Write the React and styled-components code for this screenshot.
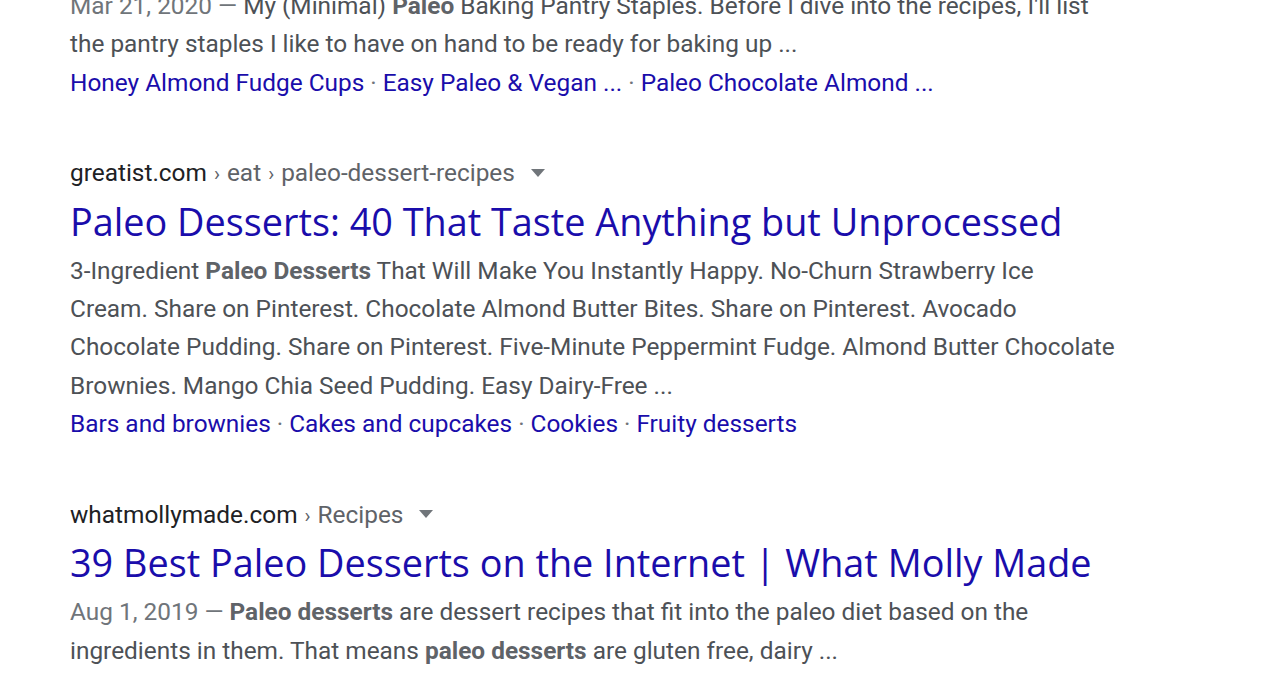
import styled, { createGlobalStyle } from "styled-components";

const GlobalStyle = createGlobalStyle`
  html, body {
    margin: 0;
    padding: 0;
    background: #ffffff;
    overflow: hidden;
  }
  body {
    font-family: Roboto, "Liberation Sans", Arial, sans-serif;
  }
`;

const results = [
  {
    id: 1,
    snippet: [
      [
        { t: "Mar 21, 2020 — ", date: true },
        { t: "My (Minimal) " },
        { t: "Paleo", b: true },
        { t: " Baking Pantry Staples. Before I dive into the recipes, I'll list" },
      ],
      [{ t: "the pantry staples I like to have on hand to be ready for baking up ..." }],
    ],
    links: ["Honey Almond Fudge Cups", "Easy Paleo & Vegan ...", "Paleo Chocolate Almond ..."],
  },
  {
    id: 2,
    domain: "greatist.com",
    path: ["eat", "paleo-dessert-recipes"],
    title: "Paleo Desserts: 40 That Taste Anything but Unprocessed",
    snippet: [
      [
        { t: "3-Ingredient " },
        { t: "Paleo Desserts", b: true },
        { t: " That Will Make You Instantly Happy. No-Churn Strawberry Ice" },
      ],
      [{ t: "Cream. Share on Pinterest. Chocolate Almond Butter Bites. Share on Pinterest. Avocado" }],
      [{ t: "Chocolate Pudding. Share on Pinterest. Five-Minute Peppermint Fudge. Almond Butter Chocolate" }],
      [{ t: "Brownies. Mango Chia Seed Pudding. Easy Dairy-Free ..." }],
    ],
    links: ["Bars and brownies", "Cakes and cupcakes", "Cookies", "Fruity desserts"],
  },
  {
    id: 3,
    domain: "whatmollymade.com",
    path: ["Recipes"],
    title: "39 Best Paleo Desserts on the Internet | What Molly Made",
    snippet: [
      [
        { t: "Aug 1, 2019 — ", date: true },
        { t: "Paleo desserts", b: true },
        { t: " are dessert recipes that fit into the paleo diet based on the" },
      ],
      [
        { t: "ingredients in them. That means " },
        { t: "paleo desserts", b: true },
        { t: " are gluten free, dairy ..." },
      ],
    ],
  },
];

export default function App() {
  return (
    <>
      <GlobalStyle />
      <Page>
        {results.map((r) => (
          <Result key={r.id}>
            {r.domain && (
              <Cite>
                <Domain>{r.domain}</Domain>
                {r.path.map((p) => (
                  <Crumb key={p}>
                    <Sep>›</Sep>
                    {p}
                  </Crumb>
                ))}
                <Caret aria-hidden="true">
                  <svg width="14" height="8" viewBox="0 0 14 8">
                    <path d="M0 0 L14 0 L7 8 Z" fill="#70757a" />
                  </svg>
                </Caret>
              </Cite>
            )}
            {r.title && <Title href="#">{r.title}</Title>}
            <Snippet $afterTitle={!!r.title}>
              {r.snippet.map((line, i) => (
                <SnippetLine key={i}>
                  {line.map((part, j) =>
                    part.b ? (
                      <Em key={j}>{part.t}</Em>
                    ) : part.date ? (
                      <DateText key={j}>{part.t}</DateText>
                    ) : (
                      <span key={j}>{part.t}</span>
                    )
                  )}
                </SnippetLine>
              ))}
            </Snippet>
            {r.links && (
              <Links>
                {r.links.map((l, i) => (
                  <span key={l}>
                    {i > 0 && <Dot>·</Dot>}
                    <SubLink href="#">{l}</SubLink>
                  </span>
                ))}
              </Links>
            )}
          </Result>
        ))}
      </Page>
    </>
  );
}

const Page = styled.main`
  display: flex;
  flex-direction: column;
  gap: 51px;
  padding: 0 70px;
  margin-top: -13px;
`;

const Result = styled.section`
  display: flex;
  flex-direction: column;
`;

const Cite = styled.div`
  display: flex;
  align-items: center;
  height: 40px;
  font-size: 24.4px;
  color: #5f6368;
`;

const Domain = styled.span`
  color: #202124;
`;

const Crumb = styled.span`
  color: #5f6368;
`;

const Sep = styled.span`
  margin: 0 7px;
  font-size: 20px;
`;

const Caret = styled.span`
  display: inline-flex;
  margin-left: 16px;
`;

const Title = styled.a`
  display: block;
  font-family: "Open Sans", Roboto, sans-serif;
  font-size: 37.8px;
  line-height: 57px;
  color: #1a0dab;
  text-decoration: none;
  white-space: nowrap;
`;

const Snippet = styled.div`
  margin-top: ${(p) => (p.$afterTitle ? "2px" : "0")};
  font-size: 24.4px;
  line-height: 38.3px;
  color: #4d5156;
`;

const SnippetLine = styled.div`
  white-space: nowrap;
`;

const Em = styled.b`
  font-weight: 700;
  color: #5f6368;
`;

const DateText = styled.span`
  color: #70757a;
`;

const Links = styled.div`
  font-size: 24.4px;
  line-height: 38.3px;
  white-space: nowrap;
`;

const Dot = styled.span`
  color: #70757a;
  margin: 0 6px;
`;

const SubLink = styled.a`
  color: #1a0dab;
  text-decoration: none;
`;
